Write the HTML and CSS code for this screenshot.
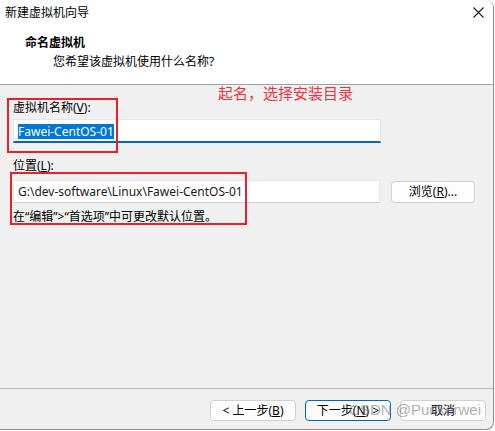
FILE: index.html
```html
<!DOCTYPE html>
<html lang="zh-CN">
<head>
    <meta charset="UTF-8">
    <meta name="viewport" content="width=device-width, initial-scale=1.0">
    <title>新建虚拟机向导</title>
    <link rel="stylesheet" href="styles.css">
</head>
<body>
    <div class="window">
        <div class="titlebar">
            <span class="title">新建虚拟机向导</span>
            <svg class="close" width="11" height="11" viewBox="0 0 11 11">
                <path d="M0.5 0.5 L10.5 10.5 M10.5 0.5 L0.5 10.5" stroke="#1a1a1a" stroke-width="1.1" fill="none"/>
            </svg>
        </div>
        <div class="header">
            <div class="heading">命名虚拟机</div>
            <div class="subheading">您希望该虚拟机使用什么名称?</div>
        </div>
        <div class="content">
            <div class="label">虚拟机名称(<u>V</u>):</div>
            <div class="input focused"><span class="selected">Fawei-CentOS-01</span></div>

            <div class="label label-gap">位置(<u>L</u>):</div>
            <div class="row">
                <div class="input path">G:\dev-software\Linux\Fawei-CentOS-01</div>
                <button class="btn browse">浏览(<u>R</u>)...</button>
            </div>
            <div class="hint">在“编辑”&gt;“首选项”中可更改默认位置。</div>

            <div class="note">起名，选择安装目录</div>
            <div class="mark mark-name"></div>
            <div class="mark mark-path"></div>
        </div>
        <div class="footer">
            <button class="btn">&lt; 上一步(<u>B</u>)</button>
            <button class="btn default">下一步(<u>N</u>) &gt;</button>
            <button class="btn">取消</button>
            <div class="watermark">CSDN @Punkerwei</div>
        </div>
    </div>
</body>
</html>
```

FILE: styles.css
```css
body {
    margin: 0;
    background: #ffffff;
    font-family: "Noto Sans", "Noto Sans CJK SC", sans-serif;
    font-size: 12px;
    color: #000000;
}

.window {
    width: 493px;
    height: 429px;
    border-right: 1px solid #8c8c8c;
    border-bottom: 1px solid #8c8c8c;
    border-radius: 0 8px 8px 0;
    overflow: hidden;
    background: #f0f0f0;
}

.titlebar {
    height: 26px;
    background: #ffffff;
    display: flex;
    align-items: center;
    justify-content: space-between;
    padding: 0 9px 0 5px;
}

.title {
    line-height: 26px;
}

.close {
    margin-top: -1px;
}

.header {
    height: 58px;
    background: #ffffff;
    border-bottom: 1px solid #a0a0a0;
}

.heading {
    font-weight: bold;
    padding: 8px 0 0 25px;
    line-height: 18px;
}

.subheading {
    padding: 1px 0 0 53px;
    line-height: 18px;
}

.content {
    position: relative;
    height: 303px;
    padding: 0 13px;
    border-bottom: 1px solid #b8b8b8;
}

.label {
    padding-top: 14px;
    line-height: 18px;
    margin-bottom: 2px;
}

.label-gap {
    padding-top: 14px;
    margin-bottom: 5px;
}

.input {
    box-sizing: border-box;
    width: 368px;
    height: 24px;
    background: #ffffff;
    border: 1px solid #e6e6e6;
    padding: 0 4px;
    line-height: 21px;
}

.input.focused {
    border-bottom: 2px solid #0067c0;
    padding-top: 1px;
}

.selected {
    background: #0078d7;
    color: #ffffff;
    display: inline-block;
    line-height: 15px;
}

.row {
    display: flex;
    align-items: flex-start;
    gap: 11px;
}

.input.path {
    width: 367px;
    height: 23px;
    border-bottom-color: #cfcfcf;
    color: #1a1a1a;
}

.btn {
    box-sizing: border-box;
    width: 86px;
    height: 21px;
    background: #fdfdfd;
    border: 1px solid #d0d0d0;
    border-radius: 4px;
    font-family: inherit;
    font-size: 12px;
    color: #000000;
    padding: 0;
    line-height: 18px;
}

.browse {
    width: 84px;
    height: 22px;
    margin-top: 1px;
}

.hint {
    padding-top: 5px;
    line-height: 18px;
}

.footer {
    position: relative;
    display: flex;
    justify-content: flex-end;
    gap: 9px;
    padding: 11px 7px 0 0;
}

.btn.default {
    border-color: #0067c0;
}

/* annotations drawn over the screenshot */
.note {
    position: absolute;
    left: 218px;
    top: -2px;
    font-size: 15px;
    line-height: 20px;
    color: #f0303c;
}

.mark {
    position: absolute;
    border: 2px solid #e8202a;
}

.mark-name {
    left: 7px;
    top: 13px;
    width: 107px;
    height: 51px;
}

.mark-path {
    left: 10px;
    top: 87px;
    width: 233px;
    height: 49px;
}

.watermark {
    position: absolute;
    right: 12px;
    top: 12px;
    font-family: "Liberation Sans", sans-serif;
    font-size: 15px;
    color: rgba(110, 110, 110, 0.55);
    pointer-events: none;
}
```
